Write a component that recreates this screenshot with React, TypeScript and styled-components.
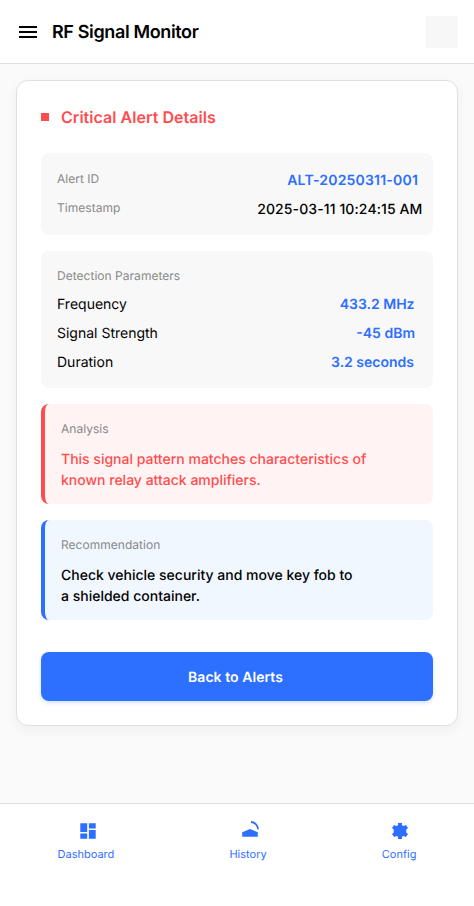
import React from "react";
import styled, { createGlobalStyle } from "styled-components";

const BLUE = "#2d6fff";
const RED = "#ff4d4f";

const GlobalStyle = createGlobalStyle`
  * { box-sizing: border-box; }
  body {
    margin: 0;
    background: #fafafa;
    color: #000;
    font-family: Inter, "Liberation Sans", sans-serif;
    text-rendering: geometricPrecision;
  }
`;

const Screen = styled.div`
  display: flex;
  flex-direction: column;
  width: 100%;
  height: 906px;
  overflow: hidden;
`;

const Header = styled.header`
  display: flex;
  align-items: center;
  height: 64px;
  padding: 0 16px;
  background: #fff;
  border-bottom: 1px solid #e0e0e0;
`;

const MenuButton = styled.button`
  display: flex;
  width: 24px;
  height: 24px;
  padding: 0;
  border: 0;
  background: none;
  color: #000;
`;

const Title = styled.h1`
  flex: 1;
  margin: 0 0 0 12px;
  padding-top: 2px;
  font-size: 18px;
  font-weight: 600;
  line-height: 24px;
  letter-spacing: -0.37px;
`;

const Avatar = styled.div`
  width: 32px;
  height: 32px;
  background: #f7f7f7;
`;

const Main = styled.main`
  flex: 1;
  padding: 16px;
`;

const Card = styled.section`
  display: flex;
  flex-direction: column;
  gap: 16px;
  height: 646px;
  padding: 24px;
  background: #fff;
  border: 1px solid #e0e0e0;
  border-radius: 12px;
  box-shadow: 0 4px 12px rgba(0, 0, 0, 0.05);
`;

const CardHeading = styled.div`
  display: flex;
  align-items: center;
  gap: 12px;
  height: 24px;
  margin-bottom: 8px;
`;

const Marker = styled.span`
  width: 8px;
  height: 8px;
  background: ${RED};
`;

const CardTitle = styled.h2`
  margin: 0;
  color: ${RED};
  font-size: 16px;
  font-weight: 600;
  line-height: 24px;
  letter-spacing: 0.04px;
`;

const Panel = styled.div<{ $height: number }>`
  display: flex;
  flex-direction: column;
  gap: 8px;
  height: ${(p) => p.$height}px;
  padding: 16px;
  background: #f8f8f8;
  border-radius: 8px;
`;

const Label = styled.div`
  color: #888;
  font-size: 12px;
  line-height: 18px;
  letter-spacing: 0.03px;
`;

const Row = styled.div`
  display: flex;
  align-items: flex-start;
  justify-content: space-between;
  height: 21px;
  font-size: 14px;
  line-height: 23px;

  ${Label} {
    line-height: 20px;
  }
`;

const Value = styled.span<{ $inset: number; $plain?: boolean; $spacing?: number }>`
  margin-right: ${(p) => p.$inset}px;
  color: ${(p) => (p.$plain ? "#000" : BLUE)};
  font-weight: ${(p) => (p.$plain ? 500 : 600)};
  letter-spacing: ${(p) => p.$spacing ?? 0}px;
  white-space: nowrap;
`;

const Callout = styled.div<{ $accent: string; $fill: string; $ink: string }>`
  height: 100px;
  padding: 16px;
  background: ${(p) => p.$fill};
  border-left: 4px solid ${(p) => p.$accent};
  border-radius: 8px;
  color: ${(p) => p.$ink};
`;

const Message = styled.p<{ $width: number }>`
  max-width: ${(p) => p.$width}px;
  margin: 11px 0 0;
  font-size: 14px;
  font-weight: 500;
  line-height: 21px;
`;

const BackButton = styled.button`
  height: 49px;
  margin-top: 16px;
  padding: 2px 3px 0 0;
  border: 0;
  border-radius: 8px;
  background: ${BLUE};
  box-shadow: 0 2px 4px rgba(45, 111, 255, 0.2);
  color: #fff;
  font: 600 14px/21px Inter, "Liberation Sans", sans-serif;
  letter-spacing: 0.05px;
  text-rendering: inherit;
`;

const Nav = styled.nav`
  display: flex;
  justify-content: space-around;
  height: 103px;
  padding-top: 15px;
  background: #fff;
  border-top: 1px solid #e0e0e0;
`;

const NavItem = styled.a`
  display: flex;
  flex-direction: column;
  align-items: center;
  color: ${BLUE};
  font-size: 11px;
  line-height: 16px;
`;

const NavIcon = styled.span<{ $shift: number }>`
  display: flex;
  width: 24px;
  height: 24px;
  margin: 0 0 3px ${(p) => p.$shift}px;
`;

const MenuIcon = () => (
  <svg width="24" height="24" viewBox="0 0 24 24" fill="currentColor">
    <path d="M3 18h18v-2H3v2zm0-5h18v-2H3v2zm0-7v2h18V6H3z" />
  </svg>
);

const DashboardIcon = () => (
  <svg width="24" height="24" viewBox="0 0 24 24" fill="currentColor">
    <path d="M4.3 4.3h6.9v8.6H4.3zM12.9 4.3h6.8v5.1h-6.8zM4.3 14.6h6.9v5.1H4.3zM12.9 11.1h6.8v8.6h-6.8z" />
  </svg>
);

const HistoryIcon = () => (
  <svg width="24" height="24" viewBox="0 0 24 24" fill="currentColor">
    <path d="M4.2 13.2 12 10.1l7.8 3.1v4.5H4.2z" />
    <path d="M13 3a7.5 7.5 0 0 1 7.1 7.3" fill="none" stroke="currentColor" strokeWidth="1.8" />
  </svg>
);

const ConfigIcon = () => (
  <svg width="24" height="24" viewBox="0 0 24 24" fill="currentColor">
    <path d="M10 4h4v2.2l1.6.9 2.4-1.1 2 3.1-1.7 1.5v2.8l1.7 1.5-2 3.1-2.4-1.1-1.6.9V20h-4v-2.2l-1.6-.9L6 18l-2-3.1 1.7-1.5v-2.8L4 9.1 6 6l2.4 1.1 1.6-.9z" />
  </svg>
);

const NAV = [
  { label: "Dashboard", icon: <DashboardIcon />, shift: 5 },
  { label: "History", icon: <HistoryIcon />, shift: 3 },
  { label: "Config", icon: <ConfigIcon />, shift: 2 },
];

const PARAMETERS = [
  { name: "Frequency", value: "433.2 MHz", inset: 2.5 },
  { name: "Signal Strength", value: "-45 dBm", inset: 2 },
  { name: "Duration", value: "3.2 seconds", inset: 3 },
];

export default function App() {
  return (
    <Screen>
      <GlobalStyle />
      <Header>
        <MenuButton aria-label="Menu">
          <MenuIcon />
        </MenuButton>
        <Title>RF Signal Monitor</Title>
        <Avatar />
      </Header>
      <Main>
        <Card>
          <CardHeading>
            <Marker />
            <CardTitle>Critical Alert Details</CardTitle>
          </CardHeading>
          <Panel $height={82}>
            <Row>
              <Label>Alert ID</Label>
              <Value $inset={-1} $spacing={0.19}>ALT-20250311-001</Value>
            </Row>
            <Row>
              <Label>Timestamp</Label>
              <Value $inset={-5.5} $spacing={0.11} $plain>2025-03-11 10:24:15 AM</Value>
            </Row>
          </Panel>
          <Panel $height={137}>
            <Label>Detection Parameters</Label>
            {PARAMETERS.map((p) => (
              <Row key={p.name}>
                <span>{p.name}</span>
                <Value $inset={p.inset}>{p.value}</Value>
              </Row>
            ))}
          </Panel>
          <Callout $accent={RED} $fill="#fff4f3" $ink={RED}>
            <Label>Analysis</Label>
            <Message $width={320}>This signal pattern matches characteristics of known relay attack amplifiers.</Message>
          </Callout>
          <Callout $accent={BLUE} $fill="#f0f7ff" $ink="#000">
            <Label>Recommendation</Label>
            <Message $width={298}>Check vehicle security and move key fob to a shielded container.</Message>
          </Callout>
          <BackButton>Back to Alerts</BackButton>
        </Card>
      </Main>
      <Nav>
        {NAV.map((n) => (
          <NavItem key={n.label}>
            <NavIcon $shift={n.shift}>{n.icon}</NavIcon>
            {n.label}
          </NavItem>
        ))}
      </Nav>
    </Screen>
  );
}
